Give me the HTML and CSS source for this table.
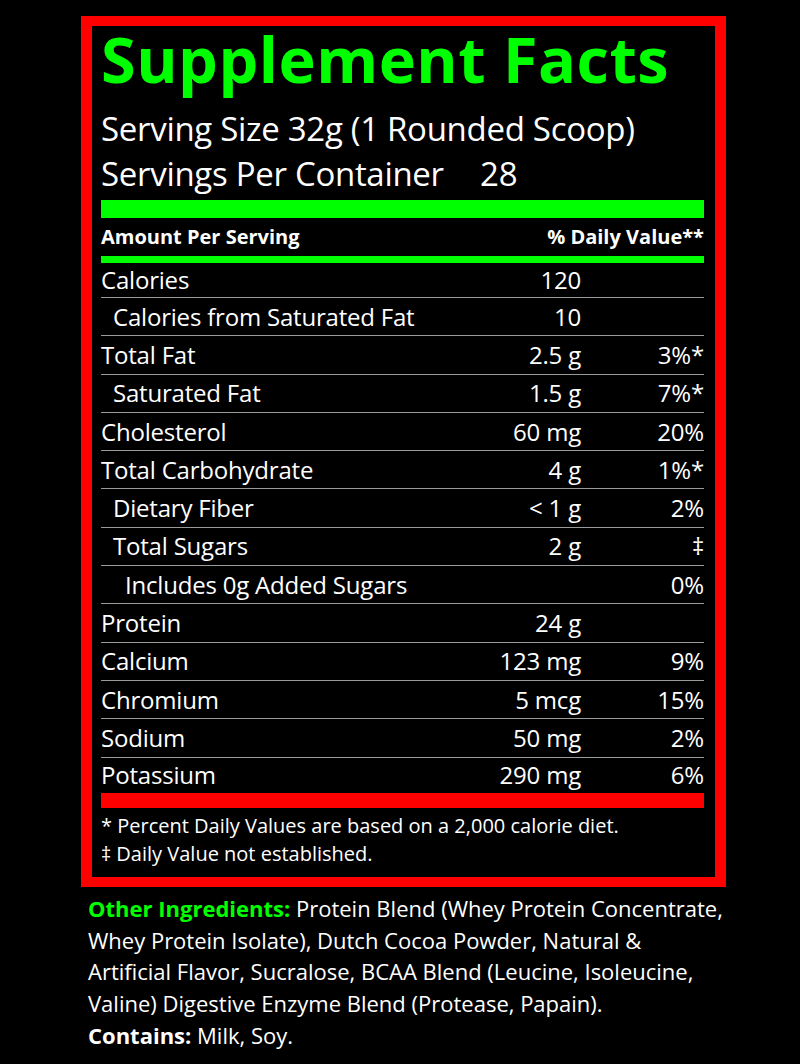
FILE: index.html
```html
<!DOCTYPE html>
<html>
<head>
<meta charset="utf-8">
<link rel="stylesheet" href="styles.css">
</head>
<body>
<div class="panel">
  <h1 class="title">Supplement Facts</h1>
  <div class="serving">
    <div>Serving Size 32g (1 Rounded Scoop)</div>
    <div>Servings Per Container <span class="count">28</span></div>
  </div>
  <div class="bar-green-thick"></div>
  <div class="head">
    <span>Amount Per Serving</span>
    <span>% Daily Value**</span>
  </div>
  <div class="bar-green-thin"></div>
  <div class="rows">
    <div class="row"><span class="name">Calories</span><span class="amt">120</span><span class="dv"></span></div>
    <div class="row"><span class="name ind1">Calories from Saturated Fat</span><span class="amt">10</span><span class="dv"></span></div>
    <div class="row"><span class="name">Total Fat</span><span class="amt">2.5 g</span><span class="dv">3%*</span></div>
    <div class="row"><span class="name ind1">Saturated Fat</span><span class="amt">1.5 g</span><span class="dv">7%*</span></div>
    <div class="row"><span class="name">Cholesterol</span><span class="amt">60 mg</span><span class="dv">20%</span></div>
    <div class="row"><span class="name">Total Carbohydrate</span><span class="amt">4 g</span><span class="dv">1%*</span></div>
    <div class="row"><span class="name ind1">Dietary Fiber</span><span class="amt">&lt; 1 g</span><span class="dv">2%</span></div>
    <div class="row"><span class="name ind1">Total Sugars</span><span class="amt">2 g</span><span class="dv">‡</span></div>
    <div class="row"><span class="name ind2">Includes 0g Added Sugars</span><span class="amt"></span><span class="dv">0%</span></div>
    <div class="row"><span class="name">Protein</span><span class="amt">24 g</span><span class="dv"></span></div>
    <div class="row"><span class="name">Calcium</span><span class="amt">123 mg</span><span class="dv">9%</span></div>
    <div class="row"><span class="name">Chromium</span><span class="amt">5 mcg</span><span class="dv">15%</span></div>
    <div class="row"><span class="name">Sodium</span><span class="amt">50 mg</span><span class="dv">2%</span></div>
    <div class="row"><span class="name">Potassium</span><span class="amt">290 mg</span><span class="dv">6%</span></div>
  </div>
  <div class="bar-red"></div>
  <div class="notes">
    <div>* Percent Daily Values are based on a 2,000 calorie diet.</div>
    <div>‡ Daily Value not established.</div>
  </div>
</div>
<div class="ingredients">
  <span class="label-green">Other Ingredients:</span> Protein Blend (Whey Protein Concentrate,<br>
  Whey Protein Isolate), Dutch Cocoa Powder, Natural &amp;<br>
  Artificial Flavor, Sucralose, BCAA Blend (Leucine, Isoleucine,<br>
  Valine) Digestive Enzyme Blend (Protease, Papain).<br>
  <span class="label-bold">Contains:</span> Milk, Soy.
</div>
</body>
</html>
```

FILE: styles.css
```css
html, body {
  margin: 0;
  padding: 0;
  background: #000;
}
body {
  font-family: "Open Sans", "Noto Sans", "Liberation Sans", sans-serif;
  color: #fff;
  width: 800px;
  height: 1064px;
  overflow: hidden;
}
.panel {
  box-sizing: border-box;
  margin: 16px 0 0 81px;
  width: 645px;
  border: 11px solid #ff0000;
  border-top-width: 10px;
  border-bottom-width: 10px;
  padding: 0 11px 9px 9px;
}
.title {
  margin: 2px 0 0 0;
  font-size: 63px;
  line-height: 62px;
  font-weight: 700;
  color: #00ff00;
  letter-spacing: 0.5px;
}
.serving {
  margin-top: 16px;
  font-size: 33px;
  line-height: 45px;
  letter-spacing: -0.3px;
}
.count {
  margin-left: 28px;
}
.bar-green-thick {
  margin-top: 4px;
  height: 18px;
  background: #00ff00;
}
.head {
  display: flex;
  justify-content: space-between;
  font-size: 20px;
  font-weight: 700;
  line-height: 38px;
  height: 38px;
}
.bar-green-thin {
  height: 7px;
  background: #00ff00;
}
.rows {
  display: flex;
  flex-direction: column;
}
.row {
  box-sizing: border-box;
  display: grid;
  grid-template-columns: 1fr 150px 123px;
  align-items: center;
  height: 38.3px;
  border-top: 1px solid #9a9a9a;
  font-size: 24px;
  line-height: 30px;
  letter-spacing: -0.2px;
}
.row:first-child {
  height: 34px;
  border-top: none;
}
.row:last-child {
  height: 36.4px;
}
.name { white-space: nowrap; }
.ind1 { padding-left: 12px; }
.ind2 { padding-left: 24px; }
.amt, .dv { text-align: right; white-space: nowrap; }
.bar-red {
  height: 15px;
  background: #ff0000;
}
.notes {
  margin-top: 4px;
  font-size: 20px;
  line-height: 28px;
}
.ingredients {
  margin: 6px 0 0 88px;
  font-size: 22px;
  line-height: 31.75px;
  white-space: nowrap;
}
.label-green {
  color: #00ff00;
  font-weight: 700;
}
.label-bold {
  font-weight: 700;
}
```
